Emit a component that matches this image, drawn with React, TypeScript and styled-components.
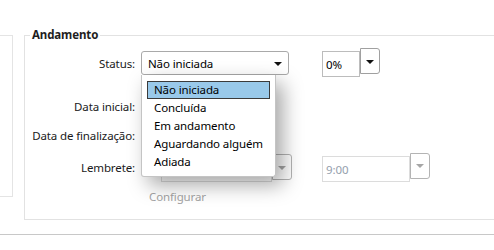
import * as React from 'react';
import styled, { createGlobalStyle } from 'styled-components';

const GlobalStyle = createGlobalStyle`
  html, body {
    margin: 0;
    padding: 0;
    background: #ffffff;
  }
  body {
    font-family: 'Noto Sans', 'Segoe UI', sans-serif;
    font-size: 11.5px;
    letter-spacing: -0.12px;
    color: #1a1a1a;
  }
`;

const STATUS_OPTIONS = [
  'Não iniciada',
  'Concluída',
  'Em andamento',
  'Aguardando alguém',
  'Adiada',
];

const Page = styled.div`
  width: 494px;
  height: 250px;
  overflow: hidden;
  display: flex;
  flex-direction: column;
`;

const Body = styled.div`
  box-sizing: border-box;
  display: flex;
  align-items: flex-start;
  padding-top: 27px;
  height: 234px;
  flex-shrink: 0;
`;

const SidePanel = styled.div`
  width: 12px;
  height: 160px;
  margin-top: 8px;
  border: 1px solid #e4e4e4;
  border-left: none;
  flex-shrink: 0;
`;

const Group = styled.fieldset`
  box-sizing: border-box;
  margin: 0 0 0 11px;
  padding: 0;
  width: 500px;
  height: 193px;
  border: 1px solid #e2e2e2;
  flex-shrink: 0;
  min-width: 0;
`;

const Legend = styled.legend`
  margin-left: 5px;
  padding: 0 2px;
  font-weight: bold;
  font-size: 11.5px;
  line-height: 16px;
  color: #1e1e1e;
`;

const Row = styled.div<{ $h: number; $mt: number }>`
  display: flex;
  align-items: center;
  height: ${(p) => p.$h}px;
  margin-top: ${(p) => p.$mt}px;
`;

const Label = styled.div`
  width: 110px;
  text-align: right;
  margin-right: 6px;
  white-space: nowrap;
  color: #1a1a1a;
`;

const ComboWrap = styled.div`
  position: relative;
  width: 148px;
  height: 24px;
`;

const Combo = styled.div`
  box-sizing: border-box;
  width: 100%;
  height: 100%;
  border: 1px solid #a9a9a9;
  border-radius: 3px;
  background: #ffffff;
  display: flex;
  align-items: center;
  padding-left: 6px;
  padding-right: 6px;
  padding-top: 1px;
  justify-content: space-between;
  color: #000;
`;

const Arrow = styled.span<{ $disabled?: boolean }>`
  width: 0;
  height: 0;
  border-left: 4px solid transparent;
  border-right: 4px solid transparent;
  border-top: 4px solid ${(p) => (p.$disabled ? '#a6a6a6' : '#111111')};
  margin-top: 1px;
`;

const TextBox = styled.div<{ $w: number; $disabled?: boolean }>`
  box-sizing: border-box;
  width: ${(p) => p.$w}px;
  height: 26px;
  margin-top: 2px;
  border: 1px solid ${(p) => (p.$disabled ? '#dcdcdc' : '#bcbcbc')};
  background: #ffffff;
  display: flex;
  align-items: center;
  padding-left: 3px;
  padding-top: 1px;
  color: ${(p) => (p.$disabled ? '#95a0ad' : '#000')};
`;

const DropButton = styled.div<{ $disabled?: boolean }>`
  box-sizing: border-box;
  width: 20px;
  height: 26px;
  margin-top: -1px;
  border: 1px solid ${(p) => (p.$disabled ? '#b4b4b4' : '#a0a0a0')};
  border-radius: 0 3px 3px 0;
  background: #ffffff;
  display: flex;
  align-items: center;
  justify-content: center;
`;

const Spinner = styled.div<{ $ml: number }>`
  display: flex;
  align-items: flex-start;
  margin-left: ${(p) => p.$ml}px;
`;

const Check = styled.div`
  box-sizing: border-box;
  width: 13px;
  height: 13px;
  border: 1px solid #cfcfcf;
  margin-right: 7px;
`;

const DateBox = styled.div`
  box-sizing: border-box;
  width: 111px;
  height: 26px;
  margin-top: 2px;
  border: 1px solid #dcdcdc;
`;

const LinkText = styled.div`
  margin-left: 124px;
  color: #a3a3a3;
`;

const List = styled.ul`
  position: absolute;
  top: 100%;
  left: 0;
  z-index: 5;
  box-sizing: border-box;
  width: 135px;
  height: 102px;
  margin: 0;
  padding: 6px 5px 0;
  list-style: none;
  background: #ffffff;
  border: 1px solid #c4c4c4;
  border-top: none;
  border-radius: 0 0 3px 3px;
  box-shadow: 7px 8px 20px rgba(0, 0, 0, 0.35);
`;

const Item = styled.li<{ $selected?: boolean }>`
  box-sizing: border-box;
  height: 18px;
  line-height: 16px;
  padding-left: 6px;
  color: #000;
  border: 1px solid ${(p) => (p.$selected ? '#3b3b3b' : 'transparent')};
  background: ${(p) => (p.$selected ? '#99c9ea' : 'transparent')};
  white-space: nowrap;
`;

const Footer = styled.div`
  flex-shrink: 0;
  border-top: 1px solid #c8c8c8;
`;

export default function App() {
  return (
    <Page>
      <GlobalStyle />
      <Body>
        <SidePanel />
        <Group>
          <Legend>Andamento</Legend>
          <Row $h={24} $mt={8}>
            <Label>Status:</Label>
            <ComboWrap>
              <Combo>
                <span>Não iniciada</span>
                <Arrow />
              </Combo>
              <List>
                {STATUS_OPTIONS.map((o, i) => (
                  <Item key={o} $selected={i === 0}>
                    {o}
                  </Item>
                ))}
              </List>
            </ComboWrap>
            <Spinner $ml={33}>
              <TextBox $w={38}>0%</TextBox>
              <DropButton>
                <Arrow />
              </DropButton>
            </Spinner>
          </Row>
          <Row $h={24} $mt={19}>
            <Label>Data inicial:</Label>
          </Row>
          <Row $h={24} $mt={5}>
            <Label>Data de finalização:</Label>
          </Row>
          <Row $h={27} $mt={7}>
            <Label>Lembrete:</Label>
            <Check />
            <DateBox />
            <DropButton $disabled>
              <Arrow $disabled />
            </DropButton>
            <Spinner $ml={30}>
              <TextBox $w={88} $disabled>
                9:00
              </TextBox>
              <DropButton $disabled>
                <Arrow $disabled />
              </DropButton>
            </Spinner>
          </Row>
          <Row $h={26} $mt={2}>
            <LinkText>Configurar</LinkText>
          </Row>
        </Group>
      </Body>
      <Footer />
    </Page>
  );
}
